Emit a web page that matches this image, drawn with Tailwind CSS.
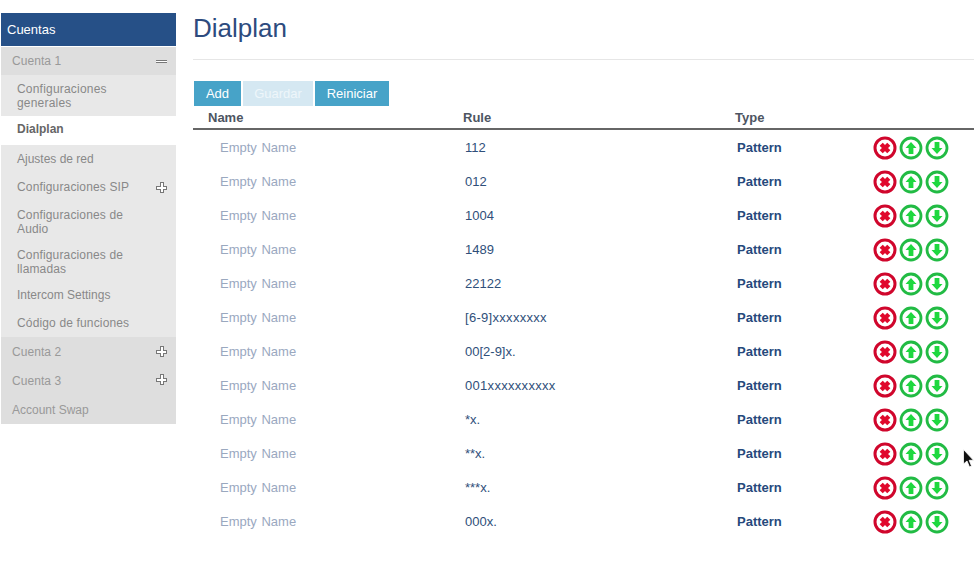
<!DOCTYPE html>
<html><head><meta charset="utf-8"><script src="https://cdn.jsdelivr.net/npm/@tailwindcss/browser@4"></script></head>
<body class="bg-white overflow-hidden font-['Liberation_Sans',Arial,sans-serif]">
<svg class="hidden" width="0" height="0">
<symbol id="del" viewBox="0 0 24 24"><circle cx="12" cy="12" r="10" fill="#fff" stroke="#d0062c" stroke-width="3"/><path d="M8.200 8.200 15.800 15.800M15.800 8.200 8.200 15.800" stroke="#e0082c" stroke-width="4.400" fill="none"/></symbol>
<symbol id="up" viewBox="0 0 24 24"><circle cx="12" cy="12" r="10" fill="#fff" stroke="#22bb44" stroke-width="2.800"/><path d="M12 6 17.500 12H14.400V18H9.600V12H6.500Z" fill="#1ed83f"/></symbol>
<symbol id="down" viewBox="0 0 24 24"><circle cx="12" cy="12" r="10" fill="#fff" stroke="#22bb44" stroke-width="2.800"/><path d="M12 18 17.500 12H14.400V6H9.600V12H6.500Z" fill="#1ed83f"/></symbol>
<symbol id="plus" viewBox="0 0 11 11"><path d="M4 .5H7V4H10.500V7H7V10.500H4V7H.5V4H4Z" fill="#fff" stroke="#777" stroke-width="1" shape-rendering="crispEdges"/></symbol>
</svg>
<div class="relative flex w-[974px] h-[570px] overflow-hidden">
  <aside class="w-[175px] ml-px mt-[13px] shrink-0 self-start text-[12px] leading-[14px]">
    <div class="h-[33px] bg-[#265087] text-white text-[13px] pl-[6px] flex items-center mb-px">Cuentas</div>
    <div class="h-[28px] bg-[#dedede] text-[#999] pl-[11px] pr-[9px] flex items-center justify-between"><span class="tracking-[0.05px]">Cuenta 1</span><span class="w-[11px] h-[3px] bg-white border-y border-[#777]"></span></div>
    <div class="bg-[#e8e8e8] text-[#888] pl-4 pr-7 pt-[7px] h-[41px] tracking-[0.2px]">Configuraciones generales</div>
    <div class="bg-white text-[#666] font-bold pl-4 h-[29px] pt-[6px]">Dialplan</div>
    <div class="bg-[#e8e8e8] text-[#888]">
      <div class="h-[28px] pl-4 flex items-center">Ajustes de red</div>
      <div class="h-[28px] pl-4 pr-[9px] flex items-center justify-between"><span class="tracking-[0.15px]">Configuraciones SIP</span><svg class="w-[11px] h-[11px]"><use href="#plus"/></svg></div>
      <div class="h-[40px] pl-4 pr-7 pt-[7px] tracking-[0.15px]">Configuraciones de Audio</div>
      <div class="h-[40px] pl-4 pr-7 pt-[7px] tracking-[0.15px]">Configuraciones de llamadas</div>
      <div class="h-[28px] pl-4 flex items-center">Intercom Settings</div>
      <div class="h-[28px] pl-4 flex items-center"><span class="tracking-[0.15px]">Código de funciones</span></div>
    </div>
    <div class="bg-[#dedede] text-[#999]">
      <div class="h-[29px] pl-[11px] pr-[9px] flex items-center justify-between"><span class="tracking-[0.05px]">Cuenta 2</span><svg class="w-[11px] h-[11px]"><use href="#plus"/></svg></div>
      <div class="h-[29px] pl-[11px] pr-[9px] flex items-center justify-between"><span class="tracking-[0.05px]">Cuenta 3</span><svg class="w-[11px] h-[11px] -mt-[3px]"><use href="#plus"/></svg></div>
      <div class="h-[29px] pl-[11px] flex items-center">Account Swap</div>
    </div>
  </aside>
  <main class="ml-[17px] flex-1 min-w-0">
    <h1 class="text-[26px] leading-[28px] text-[#2d4b7e] mt-[14px] h-[31px]">Dialplan</h1>
    <div class="h-px bg-[#e6e6e6] mt-[14px]"></div>
    <div class="flex gap-[2px] ml-px mt-[21px] text-[13px] h-[25px] leading-[25px] text-center">
      <button class="w-[47px] bg-[#47a3c8] text-white">Add</button>
      <button class="w-[70px] bg-[#d5e8f2] text-[#eef6fa]">Guardar</button>
      <button class="w-[74px] bg-[#47a3c8] text-white">Reiniciar</button>
    </div>
    <div class="h-[24px] border-b-2 border-[#666] text-[13px] font-bold text-[#4d5562] grid grid-cols-[255px_272px_1fr] pl-[15px] leading-[23px]">
      <span>Name</span><span>Rule</span><span>Type</span>
    </div>
    <div class="text-[13px] text-[#2f4f7a] mt-px">
      <div class="h-[34px] grid grid-cols-[245px_272px_136px_1fr] pl-[27px] items-center"><span class="text-[#9aa8bf] [word-spacing:1px]">Empty Name</span><span>112</span><span class="font-bold text-[#26497c]">Pattern</span><span class="flex gap-[2px]"><svg class="w-6 h-6"><use href="#del"/></svg><svg class="w-6 h-6"><use href="#up"/></svg><svg class="w-6 h-6"><use href="#down"/></svg></span></div>
      <div class="h-[34px] grid grid-cols-[245px_272px_136px_1fr] pl-[27px] items-center"><span class="text-[#9aa8bf] [word-spacing:1px]">Empty Name</span><span>012</span><span class="font-bold text-[#26497c]">Pattern</span><span class="flex gap-[2px]"><svg class="w-6 h-6"><use href="#del"/></svg><svg class="w-6 h-6"><use href="#up"/></svg><svg class="w-6 h-6"><use href="#down"/></svg></span></div>
      <div class="h-[34px] grid grid-cols-[245px_272px_136px_1fr] pl-[27px] items-center"><span class="text-[#9aa8bf] [word-spacing:1px]">Empty Name</span><span>1004</span><span class="font-bold text-[#26497c]">Pattern</span><span class="flex gap-[2px]"><svg class="w-6 h-6"><use href="#del"/></svg><svg class="w-6 h-6"><use href="#up"/></svg><svg class="w-6 h-6"><use href="#down"/></svg></span></div>
      <div class="h-[34px] grid grid-cols-[245px_272px_136px_1fr] pl-[27px] items-center"><span class="text-[#9aa8bf] [word-spacing:1px]">Empty Name</span><span>1489</span><span class="font-bold text-[#26497c]">Pattern</span><span class="flex gap-[2px]"><svg class="w-6 h-6"><use href="#del"/></svg><svg class="w-6 h-6"><use href="#up"/></svg><svg class="w-6 h-6"><use href="#down"/></svg></span></div>
      <div class="h-[34px] grid grid-cols-[245px_272px_136px_1fr] pl-[27px] items-center"><span class="text-[#9aa8bf] [word-spacing:1px]">Empty Name</span><span>22122</span><span class="font-bold text-[#26497c]">Pattern</span><span class="flex gap-[2px]"><svg class="w-6 h-6"><use href="#del"/></svg><svg class="w-6 h-6"><use href="#up"/></svg><svg class="w-6 h-6"><use href="#down"/></svg></span></div>
      <div class="h-[34px] grid grid-cols-[245px_272px_136px_1fr] pl-[27px] items-center"><span class="text-[#9aa8bf] [word-spacing:1px]">Empty Name</span><span class="tracking-[0.3px]">[6-9]xxxxxxxx</span><span class="font-bold text-[#26497c]">Pattern</span><span class="flex gap-[2px]"><svg class="w-6 h-6"><use href="#del"/></svg><svg class="w-6 h-6"><use href="#up"/></svg><svg class="w-6 h-6"><use href="#down"/></svg></span></div>
      <div class="h-[34px] grid grid-cols-[245px_272px_136px_1fr] pl-[27px] items-center"><span class="text-[#9aa8bf] [word-spacing:1px]">Empty Name</span><span>00[2-9]x.</span><span class="font-bold text-[#26497c]">Pattern</span><span class="flex gap-[2px]"><svg class="w-6 h-6"><use href="#del"/></svg><svg class="w-6 h-6"><use href="#up"/></svg><svg class="w-6 h-6"><use href="#down"/></svg></span></div>
      <div class="h-[34px] grid grid-cols-[245px_272px_136px_1fr] pl-[27px] items-center"><span class="text-[#9aa8bf] [word-spacing:1px]">Empty Name</span><span class="tracking-[0.3px]">001xxxxxxxxxx</span><span class="font-bold text-[#26497c]">Pattern</span><span class="flex gap-[2px]"><svg class="w-6 h-6"><use href="#del"/></svg><svg class="w-6 h-6"><use href="#up"/></svg><svg class="w-6 h-6"><use href="#down"/></svg></span></div>
      <div class="h-[34px] grid grid-cols-[245px_272px_136px_1fr] pl-[27px] items-center"><span class="text-[#9aa8bf] [word-spacing:1px]">Empty Name</span><span>*x.</span><span class="font-bold text-[#26497c]">Pattern</span><span class="flex gap-[2px]"><svg class="w-6 h-6"><use href="#del"/></svg><svg class="w-6 h-6"><use href="#up"/></svg><svg class="w-6 h-6"><use href="#down"/></svg></span></div>
      <div class="h-[34px] grid grid-cols-[245px_272px_136px_1fr] pl-[27px] items-center"><span class="text-[#9aa8bf] [word-spacing:1px]">Empty Name</span><span>**x.</span><span class="font-bold text-[#26497c]">Pattern</span><span class="flex gap-[2px]"><svg class="w-6 h-6"><use href="#del"/></svg><svg class="w-6 h-6"><use href="#up"/></svg><svg class="w-6 h-6"><use href="#down"/></svg></span></div>
      <div class="h-[34px] grid grid-cols-[245px_272px_136px_1fr] pl-[27px] items-center"><span class="text-[#9aa8bf] [word-spacing:1px]">Empty Name</span><span>***x.</span><span class="font-bold text-[#26497c]">Pattern</span><span class="flex gap-[2px]"><svg class="w-6 h-6"><use href="#del"/></svg><svg class="w-6 h-6"><use href="#up"/></svg><svg class="w-6 h-6"><use href="#down"/></svg></span></div>
      <div class="h-[34px] grid grid-cols-[245px_272px_136px_1fr] pl-[27px] items-center"><span class="text-[#9aa8bf] [word-spacing:1px]">Empty Name</span><span>000x.</span><span class="font-bold text-[#26497c]">Pattern</span><span class="flex gap-[2px]"><svg class="w-6 h-6"><use href="#del"/></svg><svg class="w-6 h-6"><use href="#up"/></svg><svg class="w-6 h-6"><use href="#down"/></svg></span></div>
    </div>
  </main>
  <svg class="absolute left-[963px] top-[449px]" width="11" height="19" viewBox="0 0 11 19"><path d="M.5.5V15L4 12 6.500 18 8.500 17 6.200 11.300H10.500Z" fill="#111" stroke="#fff" stroke-width=".8"/></svg>
</div>
</body></html>
